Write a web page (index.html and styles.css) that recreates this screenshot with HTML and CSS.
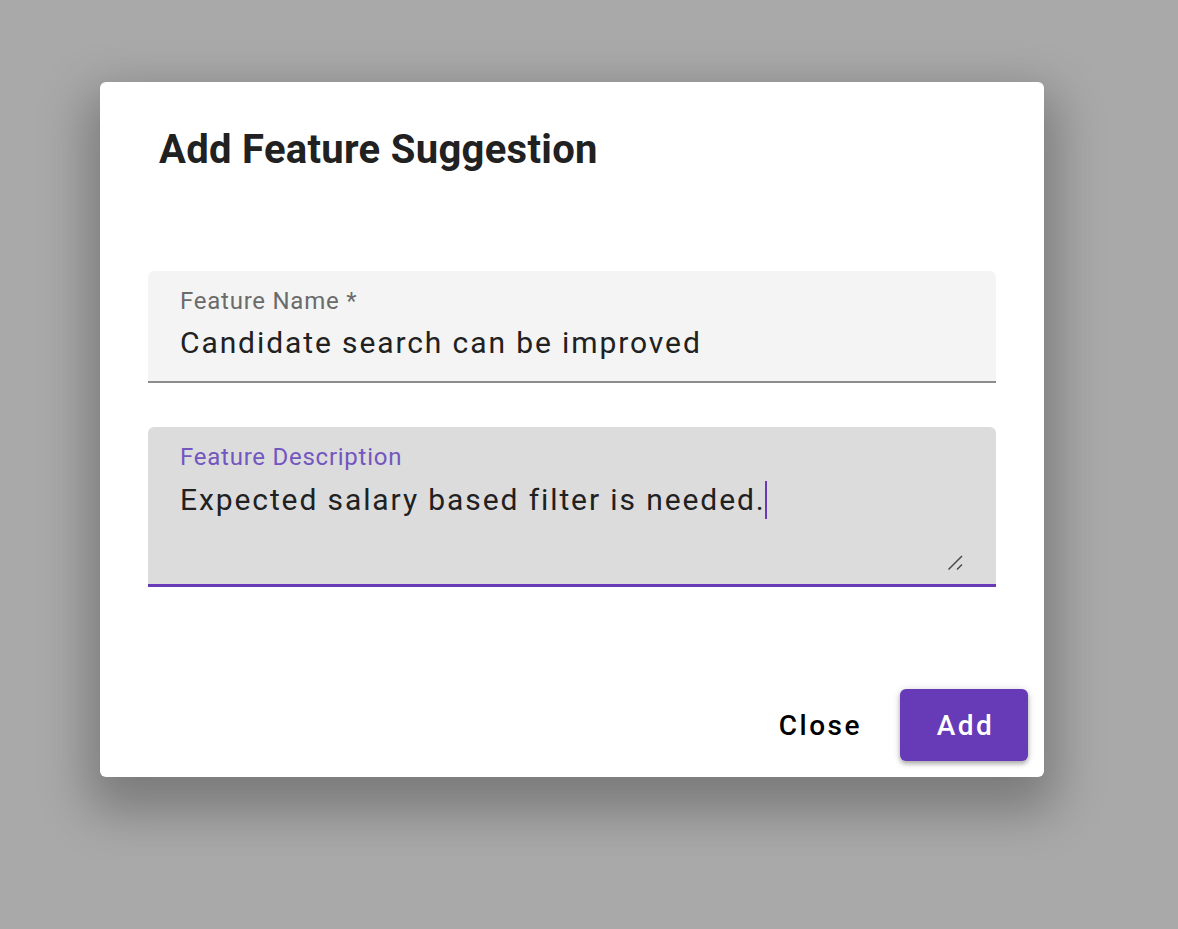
FILE: index.html
```html
<!DOCTYPE html>
<html>
<head>
<meta charset="utf-8">
<link rel="stylesheet" href="styles.css">
</head>
<body>
<div class="dialog">
  <h1 class="title">Add Feature Suggestion</h1>
  <div class="content">
    <div class="field">
      <div class="label">Feature Name *</div>
      <div class="value">Candidate search can be improved</div>
    </div>
    <div class="field focused">
      <div class="label">Feature Description</div>
      <div class="value">Expected salary based filter is needed.<span class="caret"></span></div>
      <svg class="resize" width="16" height="16" viewBox="0 0 16 16"><path d="M1.5 14.5 L15 1 M10 14.5 L15 9.5" stroke="#4a4a4a" stroke-width="1.5" fill="none"/></svg>
    </div>
  </div>
  <div class="actions">
    <button class="btn btn-text">Close</button>
    <button class="btn btn-primary">Add</button>
  </div>
</div>
</body>
</html>
```
FILE: styles.css
```css
html, body { margin: 0; padding: 0; }
body {
  background: #a9a9a9;
  width: 1178px;
  height: 929px;
  overflow: hidden;
  font-family: Roboto, "Liberation Sans", sans-serif;
}
.dialog {
  box-sizing: border-box;
  margin: 82px 0 0 100px;
  width: 944px;
  height: 695px;
  background: #fff;
  border-radius: 6px;
  box-shadow: 0 22px 50px 12px rgba(0,0,0,0.28);
  display: flex;
  flex-direction: column;
}
.title {
  margin: 0;
  padding: 44px 0 0 59px;
  font-size: 40px;
  font-weight: 700;
  line-height: 48px;
  color: #212121;
  letter-spacing: 0.3px;
}
.content {
  padding: 97px 48px 0 48px;
  display: flex;
  flex-direction: column;
  gap: 44px;
}
.field {
  position: relative;
  background: #f4f4f4;
  border-radius: 6px 6px 0 0;
  border-bottom: 2px solid #8c8c8c;
  height: 112px;
  box-sizing: border-box;
  padding: 16px 32px 0 32px;
}
.field.focused {
  background: #dcdcdc;
  border-bottom: 3px solid #673ab7;
  height: 160px;
}
.label {
  font-size: 24px;
  line-height: 28px;
  color: #6b6b6b;
  letter-spacing: 0.75px;
}
.focused .label { color: #7356bf; }
.value {
  margin-top: 10px;
  font-size: 30px;
  line-height: 36px;
  color: #212121;
  letter-spacing: 1.9px;
}
.caret {
  display: inline-block;
  width: 2px;
  height: 38px;
  background: #673ab7;
  vertical-align: -9px;
  margin-left: -1px;
}
.resize {
  position: absolute;
  right: 33px;
  bottom: 13px;
}
.actions {
  margin-top: auto;
  display: flex;
  justify-content: flex-end;
  align-items: center;
  gap: 22px;
  padding: 0 16px 16px 0;
}
.btn {
  font-family: Roboto, "Liberation Sans", sans-serif;
  font-size: 28px;
  font-weight: 500;
  letter-spacing: 2.5px;
  border: none;
  border-radius: 6px;
  height: 72px;
  cursor: pointer;
}
.btn-text {
  background: transparent;
  color: #000;
  padding: 0 16px 0 18px;
}
.btn-primary {
  background: #673ab7;
  color: #fff;
  width: 128px;
  padding: 0 0 0 3px;
  box-shadow: 0 3px 4px rgba(0,0,0,0.25), 0 1px 8px rgba(0,0,0,0.15);
}
```
